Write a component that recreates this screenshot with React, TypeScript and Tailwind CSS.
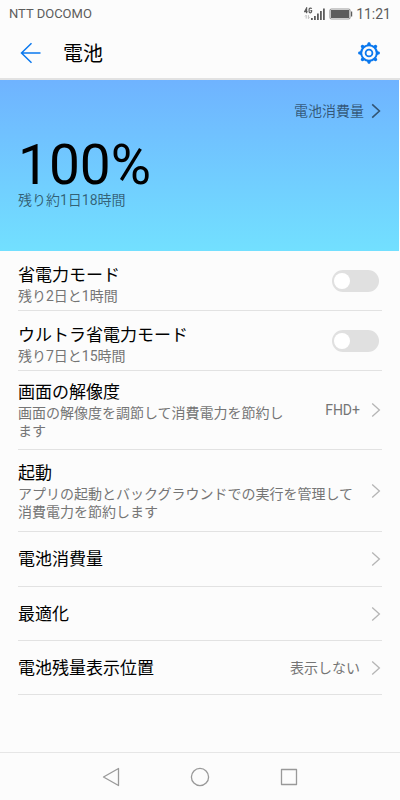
import { useState } from "react";

type Row = {
  title: string;
  sub?: string;
  value?: string;
  height: string;
};

const links: Row[] = [
  {
    title: "画面の解像度",
    sub: "画面の解像度を調節して消費電力を節約します",
    value: "FHD+",
    height: "min-h-[79px]",
  },
  {
    title: "起動",
    sub: "アプリの起動とバックグラウンドでの実行を管理して消費電力を節約します",
    height: "min-h-[82px]",
  },
  { title: "電池消費量", height: "min-h-[55px]" },
  { title: "最適化", height: "min-h-[54px]" },
  { title: "電池残量表示位置", value: "表示しない", height: "min-h-[54px]" },
];

const Chevron = ({ className }: { className: string }) => (
  <svg className={`h-4 w-[10px] shrink-0 ${className}`} viewBox="0 0 10 16" fill="none" stroke="currentColor" aria-hidden="true">
    <path d="M1.2 1.4 8.4 8l-7.2 6.6" />
  </svg>
);

const Gear = () => (
  <svg className="h-6 w-6" viewBox="0 0 24 24" fill="none" stroke="currentColor" aria-hidden="true">
    <circle cx="12" cy="12" r="7.8" strokeWidth="2" />
    <circle cx="12" cy="12" r="3.4" strokeWidth="1.8" />
    {[0, 45, 90, 135, 180, 225, 270, 315].map((a) => (
      <path key={a} d="M10.8 3.5 11.4 1.9h1.2l.6 1.6z" strokeWidth="1.4" strokeLinejoin="round" fill="currentColor" transform={`rotate(${a} 12 12)`} />
    ))}
  </svg>
);

const StatusBar = () => (
  <div className="flex h-7 items-center justify-between px-[9px] text-[#5c5c5c]">
    <span className="text-[13px] leading-4">NTT DOCOMO</span>
    <div className="flex items-center">
      <svg className="h-[14px] w-[21px]" viewBox="0 0 21 14" aria-hidden="true">
        <path d="M2.6 6.2V1L.6 4.6h3M7.6 1.9C7.2.7 5.1.8 5.1 2.4v2.2c0 1.6 2.5 1.6 2.5 0v-.9H6.4" fill="none" stroke="currentColor" strokeWidth="1.2" />
        <path d="M2.2 8.2v3.4M1 9.4l1.2-1.2M4.4 8.2v3.4m0 0 1.2-1.2" fill="none" stroke="#b8b8b8" strokeWidth=".9" />
        <path d="M7 11h1.8v2H7zM10 9h1.8v4H10zM13 6.6h1.8V13H13zM16 4h1.8v9H16zM19 1.5h1.8V13H19z" fill="currentColor" />
      </svg>
      <svg className="ml-1 h-3 w-6" viewBox="0 0 24 12" aria-hidden="true">
        <rect x="1" y="1" width="20" height="10" rx="1.5" fill="none" stroke="#9a9a9a" strokeWidth="1.2" />
        <rect x="2" y="2" width="18" height="8" fill="currentColor" />
        <path d="M22 3.5h1.2v5H22z" fill="currentColor" />
      </svg>
      <span className="ml-[3px] text-[14px] leading-4">11:21</span>
    </div>
  </div>
);

function SwitchRow({ id, title, sub }: { id: string; title: string; sub: string }) {
  const [on, setOn] = useState(false);
  return (
    <div className="flex min-h-[60px] items-center justify-between border-b border-[#e2e2e2] pr-[3px]">
      <label htmlFor={id} className="pt-[6px]">
        <span className="block text-[17px] leading-6 text-black">{title}</span>
        <span className="block text-[14px] leading-[18px] text-[#757575]">{sub}</span>
      </label>
      <input
        id={id}
        type="checkbox"
        role="switch"
        checked={on}
        onChange={(e) => setOn(e.target.checked)}
        className="flex h-[22px] w-[47px] shrink-0 appearance-none items-center rounded-full bg-[#e0e0e0] px-[2px] before:h-4 before:w-4 before:rounded-full before:bg-white checked:justify-end checked:bg-[#007dff]"
      />
    </div>
  );
}

function LinkRow({ title, sub, value, height }: Row) {
  return (
    <button type="button" className={`flex w-full items-center border-b border-[#e2e2e2] pr-px text-left ${height}`}>
      <span className="flex-1">
        <span className="block text-[17px] leading-6 text-black">{title}</span>
        {sub && <span className="block text-[14px] leading-[18px] text-[#757575]">{sub}</span>}
      </span>
      {value && <span className="ml-7 mr-1 shrink-0 text-[14px] leading-[18px] text-[#757575]">{value}</span>}
      <Chevron className="ml-[7px] stroke-[1.3] text-[#b5b5b5]" />
    </button>
  );
}

export default function App() {
  return (
    <div className="flex min-h-screen flex-col bg-[#fcfcfc] font-[Roboto,'Noto_Sans_CJK_JP',sans-serif]" lang="ja">
      <StatusBar />

      <header className="flex h-[52px] items-center border-b-2 border-[#e2e2e2] pl-5 pr-[19px]">
        <button type="button" aria-label="戻る" className="text-[#0a78ee]">
          <svg className="h-[22px] w-[22px]" viewBox="0 0 22 22" fill="none" stroke="currentColor" strokeWidth="1.5" aria-hidden="true">
            <path d="M20.5 11H1.5M11.5 1.3 1.5 11l10 9.7" />
          </svg>
        </button>
        <h1 className="ml-[21px] flex-1 pt-[2px] text-[20px] leading-6 text-black">電池</h1>
        <button type="button" aria-label="設定" className="text-[#0a78ee]">
          <Gear />
        </button>
      </header>

      <section className="mr-px flex h-[171px] flex-col bg-linear-to-b from-[#6fb3ff] to-[#72e0ff] px-[18px] pt-[21px]">
        <button type="button" className="flex items-center self-end text-[14px] leading-5 text-black/55">
          電池消費量
          <Chevron className="ml-[7px] stroke-[1.6]" />
        </button>
        <p className="mt-[18px] text-[55px] leading-[52px] text-black">100%</p>
        <p className="text-[14px] leading-[18px] text-black/55">残り約1日18時間</p>
      </section>

      <main className="flex-1 px-[18px]">
        <SwitchRow id="saver" title="省電力モード" sub="残り2日と1時間" />
        <SwitchRow id="ultra" title="ウルトラ省電力モード" sub="残り7日と15時間" />
        {links.map((row) => (
          <LinkRow key={row.title} {...row} />
        ))}
      </main>

      <nav className="flex h-12 items-center justify-center gap-[69px] border-t border-[#e6e6e6] text-[#999]">
        <button type="button" aria-label="戻る">
          <svg className="h-5 w-5" viewBox="0 0 20 20" fill="none" stroke="currentColor" strokeWidth="1.3" strokeLinejoin="round" aria-hidden="true">
            <path d="M17.5 1.5v17L2.5 10z" />
          </svg>
        </button>
        <button type="button" aria-label="ホーム">
          <svg className="h-5 w-5" viewBox="0 0 20 20" fill="none" stroke="currentColor" strokeWidth="1.3" aria-hidden="true">
            <circle cx="10" cy="10" r="8.6" />
          </svg>
        </button>
        <button type="button" aria-label="履歴">
          <svg className="h-5 w-5" viewBox="0 0 20 20" fill="none" stroke="currentColor" strokeWidth="1.3" strokeLinejoin="round" aria-hidden="true">
            <rect x="2.5" y="2.5" width="15" height="15" />
          </svg>
        </button>
      </nav>
    </div>
  );
}
